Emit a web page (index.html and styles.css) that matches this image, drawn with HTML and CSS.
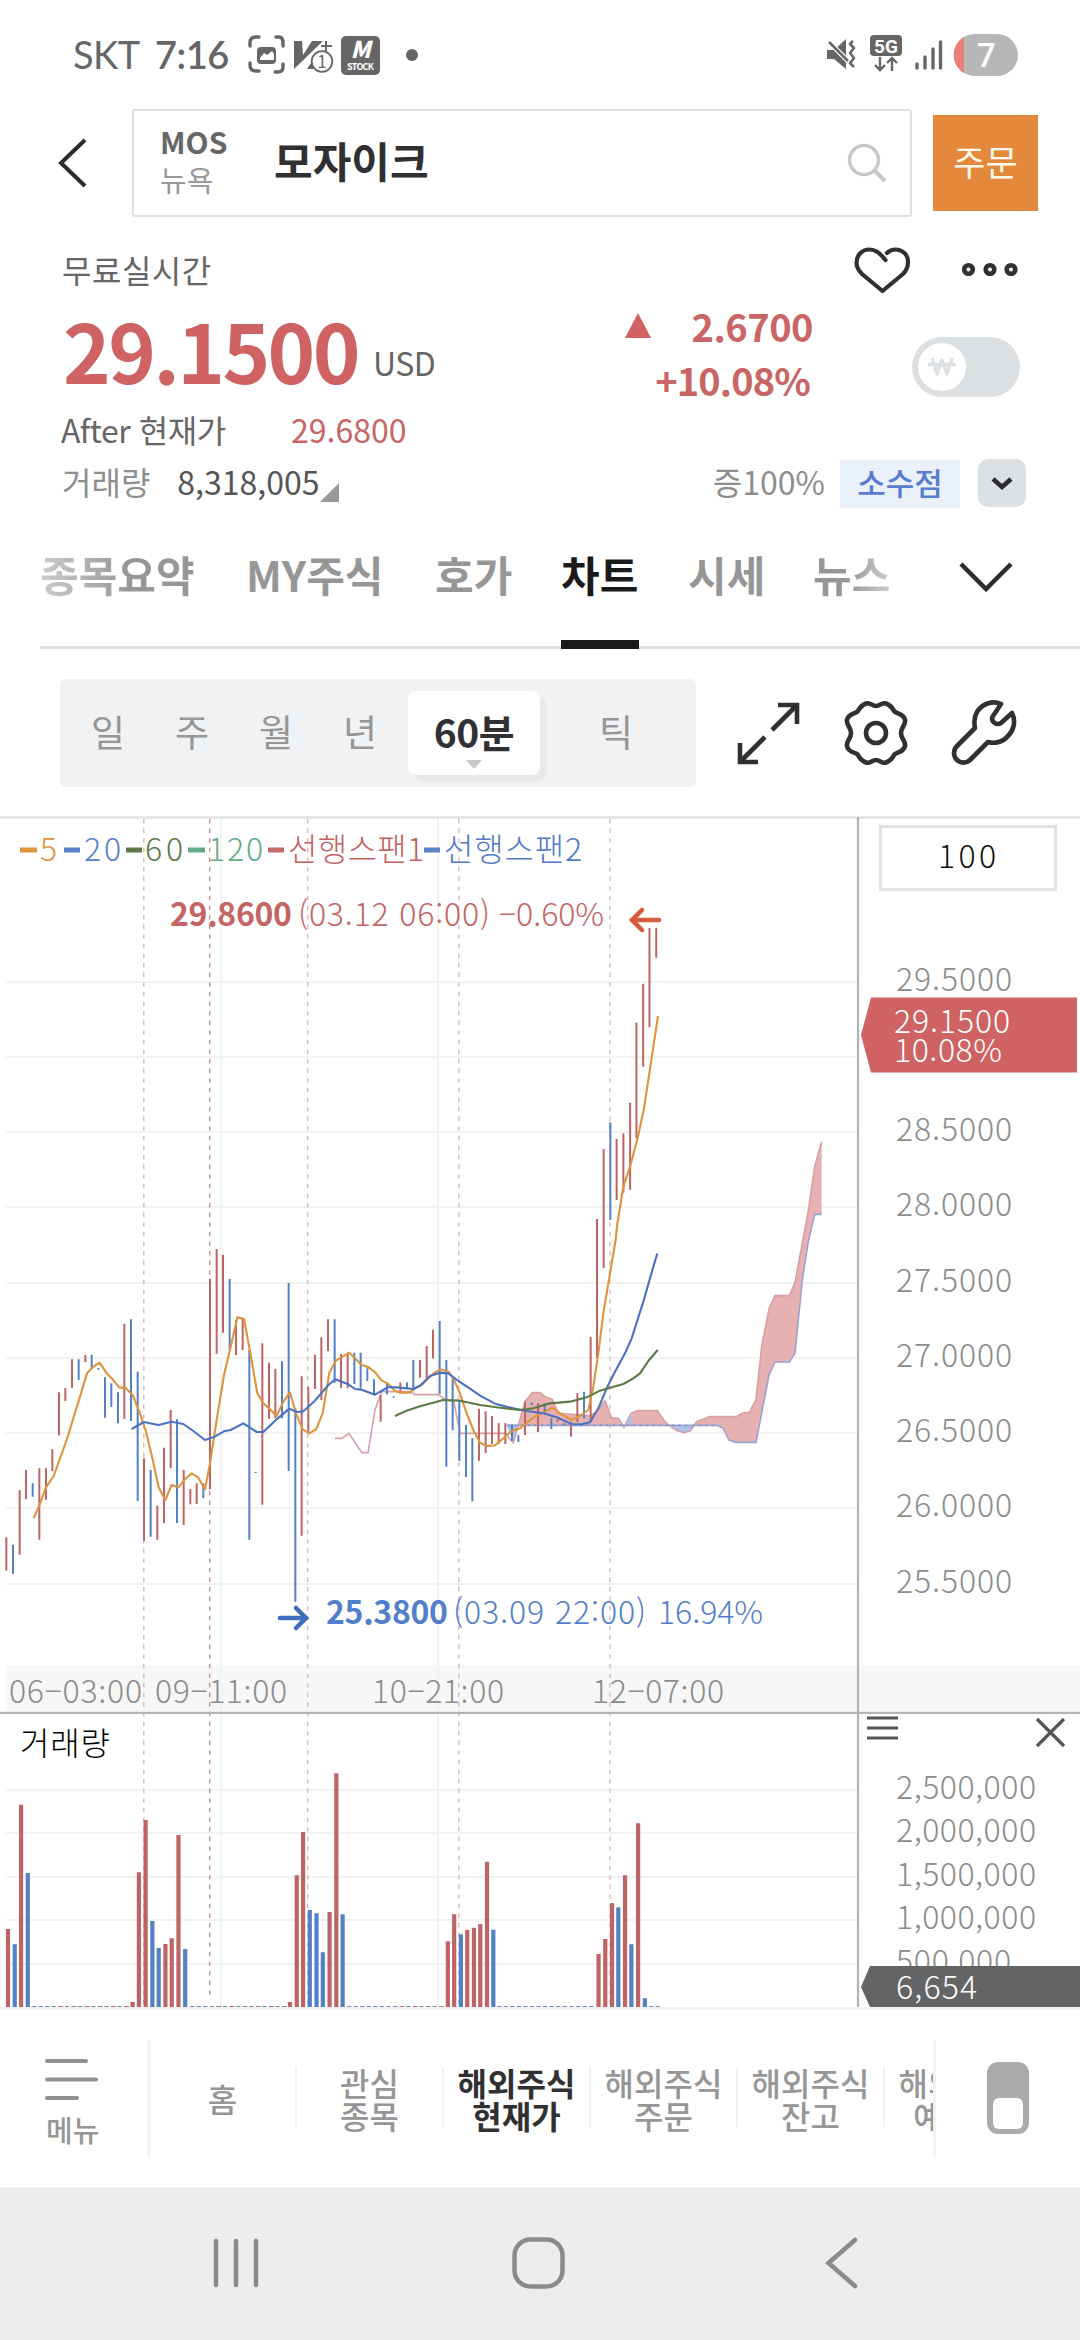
FILE: index.html
```html
<!DOCTYPE html>
<html lang="ko">
<head>
<meta charset="utf-8">
<title>모자이크 - 해외주식 현재가</title>
<link rel="stylesheet" href="styles.css">
</head>
<body>
<div class="screen">
  <header class="status">
    <span class="carrier">SKT</span><span class="clock">7:16</span>
    <svg class="status-left" width="170" height="40" viewBox="248 35 170 40">
      <g fill="none" stroke="#666" stroke-width="3.4" stroke-linecap="round">
        <path d="M250 46v-3q0-6 6-6h3M276 37h3q4 0 4 6v3M283 64v3q0 5-5 5h-3M259 71h-3q-6 0-6-6v-2"/>
      </g>
      <rect x="257" y="47" width="19" height="17" rx="4" fill="#666"/>
      <path d="M260 60v-2l4-5 3 2 5-4 2 3v6z" fill="#fff"/>
      <path d="M294 41h8l1 14 9-14h11l-29 28zM307 69l8-12h6v12z" fill="#666"/>
      <path d="M326 41v10M321 46h11" stroke="#666" stroke-width="2"/>
      <circle cx="322" cy="61.500" r="10.300" fill="#fff" stroke="#666" stroke-width="1.800"/>
      <text x="322" y="68" text-anchor="middle" font-size="17" fill="#666">1</text>
      <rect x="341" y="36" width="39" height="39" rx="5" fill="#666"/>
      <text x="360.500" y="58" text-anchor="middle" font-size="23" font-weight="900" font-style="italic" fill="#fff">M</text>
      <text x="347" y="70" textLength="27" font-size="9" font-weight="700" fill="#fff">STOCK</text>
      <circle cx="412" cy="55" r="6" fill="#666"/>
    </svg>
    <svg class="status-right" width="194" height="42" viewBox="825 34 194 42">
      <path d="M827 50h7l12-11v30l-12-10h-7z" fill="#666"/>
      <path d="M828 41l20 20" stroke="#fff" stroke-width="5"/>
      <path d="M829 42l19 19" stroke="#666" stroke-width="2.500"/>
      <path d="M853 41l-3 3 4 4-4 5 4 5-4 5 4 4" fill="none" stroke="#666" stroke-width="2.600" stroke-linejoin="round"/>
      <rect x="870" y="35" width="32" height="21" rx="4" fill="#666"/>
      <text x="886" y="52.500" text-anchor="middle" font-size="19" font-weight="700" font-family="Roboto" fill="#fff">5G</text>
      <path d="M880 57v13M875 65l5 5 5-5M892 71v-13M887 63l5-5 5 5" fill="none" stroke="#666" stroke-width="2.400"/>
      <path d="M917 64v4M925 57v11M933 49v19M940.500 42v26" stroke="#666" stroke-width="3.400" stroke-linecap="round"/>
      <rect x="954" y="34" width="64" height="42" rx="21" fill="#b7b7b7"/>
      <path d="M963.500 37.500v35A21 21 0 0 1 963.500 37.500z" fill="#ea8076" stroke="#ea8076" stroke-width="1"/>
      <text x="986.500" y="67" text-anchor="middle" font-size="33" font-weight="500" font-family="Roboto" fill="#fff">7</text>
    </svg>
  </header>

  <div class="search-row">
    <svg class="back" width="30" height="52" viewBox="0 0 30 52"><path d="M28 3L4 26l24 23" fill="none" stroke="#2c2c2e" stroke-width="4"/></svg>
    <div class="search-box">
      <div class="ticker"><b>MOS</b><span>뉴욕</span></div>
      <strong class="stock-name">모자이크</strong>
      <svg class="lens" width="40" height="40" viewBox="0 0 40 40" fill="none" stroke="#c6c9cb" stroke-width="3.500"><circle cx="17" cy="17" r="14.500"/><path d="M27 27l11 11" stroke-width="4"/></svg>
    </div>
    <button class="order">주문</button>
  </div>

  <section class="quote">
    <div class="q-live"><span>무료실시간</span>
      <svg width="170" height="50" viewBox="853 245 170 50" fill="none" stroke="#303032" stroke-linecap="round" stroke-linejoin="round">
        <path d="M885.500 260C879 252 875 249.500 869.500 249.500C861 249.500 856.500 256 856.500 263C856.500 268 859 271 862 274L882.500 291L903 274C906 271 908 268 908 262C908 254 902 249.500 895.500 249.500C892 249.500 889 251 887 253" stroke-width="4.200"/>
        <g stroke-width="4.600"><circle cx="968.500" cy="269.500" r="4.300"/><circle cx="990" cy="269.500" r="4.300"/><circle cx="1011" cy="269.500" r="4.300"/></g>
      </svg>
    </div>
    <div class="q-price">
      <span class="price">29.1500</span><span class="unit">USD</span>
      <div class="change"><div><i class="tri"></i>2.6700</div><div class="pct">+10.08%</div></div>
      <div class="won"><span><svg width="28" height="20" viewBox="0 0 28 20"><path d="M4 1l5 16 5-14 5 14 5-16M0 7.500h28" fill="none" stroke="#dce0e3" stroke-width="3.400" stroke-linejoin="round"/></svg></span></div>
    </div>
    <div class="q-after"><span class="dark">After 현재가</span><span class="after-price">29.6800</span></div>
    <div class="q-vol"><span>거래량</span><span class="vol">8,318,005</span><i class="corner"></i>
      <span class="margin">증100%</span><span class="fraction">소수점</span>
      <span class="drop"><svg width="22" height="14" viewBox="0 0 22 14"><path d="M2 3l9 8 9-8" fill="none" stroke="#2c2c2e" stroke-width="4.500"/></svg></span>
    </div>
  </section>

  <nav class="tabs">
    <span class="t1">종목요약</span><span class="t2">MY주식</span><span class="t3">호가</span><span class="t4 on">차트</span><span class="t5">시세</span><span class="t6">뉴스</span>
    <svg width="54" height="30" viewBox="0 0 54 30"><path d="M2 2l25 25L52 2" fill="none" stroke="#2c2c2e" stroke-width="4.500"/></svg>
  </nav>

  <div class="tools">
    <div class="periods"><span>일</span><span>주</span><span>월</span><span>년</span><b>60분<i></i></b><span class="tick">틱</span></div>
    <svg width="282" height="66" viewBox="736 700 282 66" fill="none" stroke="#303032" stroke-width="4.600" stroke-linejoin="round">
      <path d="M778 705h19v19M797 705l-25 25M758 762h-18v-19M740 762l25-25" stroke-linejoin="miter"/>
      <path d="M866 703.500C870 702 872 706 876 706C880 706 882 702 886 703.500C890 705 892 707 894 711C896 714 904 713 905 720C906 725 901 727 901 733C901 739 906 741 905 746C903 753 896 752 894 755C892 759 890 761 886 762.500C882 764 880 760 876 760C872 760 870 764 866 762.500C862 761 860 759 858 755C856 752 848 753 847 746C846 741 851 739 851 733C851 727 846 725 847 720C848 713 856 714 858 711C860 707 862 705 866 703.500Z"/>
      <circle cx="876" cy="733" r="10"/>
      <path d="M1001 704C992 700 982 704 977 712C974 717 974 723 975 728L957 746C953 750 953 756 957 760C961 764 967 763 970 760L988 742C995 744 1003 742 1008 736C1014 730 1016 721 1012 713L1001 723C996 726 990 721 993 716Z"/>
    </svg>
  </div>

  <main class="chart">
  <svg width="1080" height="1194" viewBox="0 816 1080 1194">
    <path d="M0 817.500H1080" stroke="#e2e2e2" stroke-width="2.500"/>
    <path d="M6 1665H1080V1711H6z" fill="#f7f7f7"/>
    <g stroke="#f3f3f3" stroke-width="2" fill="none">
      <path d="M6 982H857M6 1057H857M6 1132H857M6 1207H857M6 1283H857M6 1358H857M6 1433H857M6 1508H857M6 1584H857M6 1790H857M6 1833H857M6 1877H857M6 1920H857M6 1964H857M221 819V2007M438 819V2007"/>
    </g>
    <g stroke="#d6b4b4" stroke-width="1.300" stroke-dasharray="4.500 5.100"><path d="M143.800 819V2007M307.700 819V2007M458.800 819V2007M610 819V2007"/><path d="M209.700 819V2000" stroke="#c08888"/></g>

    <!-- Ichimoku cloud -->
    <g transform="translate(380 1240) scale(.33333)">
      <path fill="#a9c2ee" d="M380 556H415L400 608zM735 556L753 518 762 556zM872 556H942L932 574 912 578 892 573z"/>
      <path fill="#e7b1b1" d="M415 556L435 485 457 458H480L495 470 517 478 535 520 630 527 650 515 675 482 695 534H715L732 556zM755 556V518L773 512H832L855 545 872 557zM940 556L950 545 990 530H1068L1088 519 1108 517 1128 478 1146 312 1167 207 1185 167H1228L1245 128 1267 8 1284 -82 1304 -220 1325 -295V-77H1304L1284 10 1267 120 1245 340 1228 366H1185L1167 405 1146 515 1128 607H1068L1047 600 1030 565 1010 556z"/>
      <path class="ln" stroke="#d9a0a4" d="M-135 595H-115L-93 580-75 608-54 638H-36L-15 510 5 455H95L103 464H175L190 475 222 487 240 580H375L400 608 415 555 435 485 457 458H480L495 470 517 478 535 520 630 527 650 515 675 482 695 534H715L732 562 753 520 773 512H832L855 545 872 560 892 572 912 578 932 572 950 545 990 530H1068L1088 519 1108 517 1128 478 1146 312 1167 207 1185 167H1228L1245 128 1267 8 1284 -82 1304 -220 1325 -295"/>
      <path class="ln" stroke="#9aa2d2" d="M380 556H1010L1030 565 1047 600 1068 607H1128L1146 515 1167 405 1185 366H1228L1245 340 1267 120 1284 10 1304 -77H1325"/>
      <path stroke="#8289b8" stroke-width="5" stroke-dasharray="4 15.700" d="M385 556H1010"/>
    </g>
    <!-- high-low bars and moving averages -->
    <g transform="translate(0 1240) scale(.33333)">
      <path class="cd red" d="M19 892V992M59 750V944M78 690V778M118 685V899M138 685V779M157 627V694M177 457V586M196 444V483M216 358V443M256 345V367M373 251V537M432 655V902M472 797V899M492 623V850M512 510V685M551 690V855M571 747V793M590 730V792M630 116V748M650 27V341M669 44V278M708 240V345M728 233V330M787 310V794M807 368V536M826 387V535M905 409V887M925 441V577M945 344V447M964 292V480M984 238V334M1023 342V444M1043 338V445M1142 465V545"/>
      <path class="cd blue" d="M39 914V1002M98 730V770M236 358V420M275 345V385M295 384V389M315 412V533M334 430V501M354 457V550M393 238V543M413 395V783M452 690V890M531 538V849M610 730V774M689 117V327M748 330V899M767 696V699M846 364V535M866 129V693M886 505V1085M1004 238V428M1063 338V432M1082 338V445M1102 385V423M1122 418V465M1161 430V463M1181 469V473"/>
    </g>
    <g transform="translate(380 1240) scale(.33333)">
      <path class="cd red" d="M61 427V460M120 360V413M140 318V420M159 269V355M297 506V662M317 514V639M336 528V612M356 549V612M376 549V612M435 485V585M474 490V576M533 538V545M573 545V590M592 459V545M632 291V545M651 -63V355M671 -273V84"/>
      <path class="cd blue" d="M81 427V447M100 360V445M179 243V462M199 360V680M218 415V571M238 480V663M258 555V711M277 594V784M396 553V603M415 585V606M455 487V495M494 490V520M514 535V567M553 550V556M612 455V535"/>
    </g>
    <g transform="translate(0 810) scale(.42092 .33333)">
      <path class="cd red" d="M1465 987V1170M1481 970V1148M1497 878V1139M1512 638V985M1528 521V770M1543 354V652M1559 354V443"/>
      <path class="cd blue" d="M1450 937V1230"/>
    </g>
    <g transform="translate(0 1240) scale(.33333)">
      <path class="ma" stroke="#dd943e" d="M101 834L118 796 138 742 161 708 200 600 240 470 261 400 280 380 299 368 320 400 338 418 358 443H376L398 465 420 520 438 575 455 645 476 742 496 780 515 735 535 742 555 718 575 700 595 713 615 748 630 670 650 540 672 405 692 320 712 232 732 237 752 345 772 460 790 490 810 508 830 528 850 485 870 457 888 520 908 568 928 580 948 568 968 520 988 398 1008 362 1028 350 1048 338 1065 355 1085 375 1106 382 1126 398 1145 422 1164 431 1185 452 1200 458H1230L1245 445 1265 435 1285 415 1305 397 1322 388 1345 395 1360 415 1380 460 1400 520 1420 570 1440 608 1460 618 1485 616 1510 595 1535 573 1560 565 1580 548 1605 530 1630 518 1657 503 1680 520 1715 540 1740 528 1765 510 1780 440 1795 340 1810 220 1830 100 1847 0 1851 -42 1870 -160 1890 -220 1913 -305 1932 -395 1951 -520 1974 -672"/>
      <path class="ma" stroke="#4a72c4" d="M395 567L432 546 475 555 515 545 550 552 580 573 615 600 640 592 672 574 692 570 730 550 770 576H790L830 538 868 506 890 516 910 514 945 482 985 435 1006 418 1045 433 1065 447 1085 449 1125 464 1165 441 1200 443 1240 447 1260 437 1290 408 1320 398 1345 400 1375 423 1410 446 1440 467 1485 491 1540 505 1580 513 1630 520 1670 532 1715 552 1745 553 1770 547 1795 505 1820 445 1845 395 1875 340 1895 295 1930 185 1960 80 1972 40"/>
      <path class="ma" stroke="#5b7a45" d="M1185 528L1220 512 1260 499 1330 480 1380 482 1440 495 1490 502 1560 510 1600 505 1650 490 1710 485 1760 472 1800 452 1830 443 1870 432 1900 415 1920 400 1945 363 1973 330"/>
    </g>

    <!-- volume bars -->
    <g transform="translate(0 1640) scale(.42092 .33333)">
      <path class="vb red" d="M19 1101V867M50 1101V494M315 1101V1086M330 1101V697M346 1101V540M393 1101V912M408 1101V895M424 1101V585M689 1101V1086M705 1101V706M720 1101V576M783 1101V816M799 1101V400M1064 1101V904M1079 1101V823M1110 1101V870M1126 1101V863M1141 1101V852M1157 1101V665M1422 1101V942M1438 1101V897M1454 1101V790M1485 1101V706M1516 1101V550"/>
      <path class="vb blue" d="M35 1101V913M66 1101V699M362 1101V843M377 1101V924M440 1101V927M736 1101V810M752 1101V820M767 1101V937M814 1101V823M1095 1101V883M1172 1101V869M1469 1101V802M1500 1101V913M1532 1101V1075"/>
    </g>
    <path d="M32 2006.500H130M190 2006.500H288M347 2006.500H444M497 2006.500H595M649 2006.500H661" stroke="#7c8fa8" stroke-width="1.200" stroke-dasharray="4.300 2.270"/>
    <path d="M59 2006.500H130M217 2006.500H288M400 2006.500H444" stroke="#b87878" stroke-width="1.200" stroke-dasharray="4.300 8.840"/>

    <path d="M0 1712.800H1080M858 817V2007" stroke="#b3b3b3" stroke-width="2.200" fill="none"/>
    <path d="M0 2008.500H1080" stroke="#f1f2f4" stroke-width="3"/>

    <!-- legend and labels -->
    <g stroke-width="5"><path d="M20 850H37" stroke="#dd943e"/><path d="M64 850H80" stroke="#5a80cc"/><path d="M126 850H142" stroke="#5b7a45"/><path d="M188 850H205" stroke="#63ad86"/><path d="M268 850H284" stroke="#c46c6c"/><path d="M424 850H440" stroke="#5a83c9"/></g>
    <g class="num">
      <text x="40" y="861" fill="#dd943e">5</text><text x="84" y="861" textLength="37" fill="#5a80cc">20</text><text x="145" y="861" textLength="38" fill="#5b7a45">60</text><text x="208" y="861" textLength="55" fill="#63ad86">120</text>
      <text x="288" y="861" textLength="136" fill="#c05f5f">선행스팬1</text><text x="444" y="861" textLength="138" fill="#4f7ac6">선행스팬2</text>
      <g fill="#c46464"><text x="170" y="926" textLength="122" font-weight="700">29.8600</text><text x="298" y="926" textLength="192">(03.12 06:00)</text><text x="499" y="926" textLength="105">−0.60%</text></g>
      <g fill="#527fcb"><text x="326" y="1624" textLength="122" font-weight="700">25.3800</text><text x="453" y="1624" textLength="193">(03.09 22:00)</text><text x="658" y="1624" textLength="105">16.94%</text></g>
      <g fill="#8c8c8c"><text x="9" y="1703" textLength="133">06−03:00</text><text x="155" y="1703" textLength="132">09−11:00</text><text x="372" y="1703" textLength="132">10−21:00</text><text x="592" y="1703" textLength="132">12−07:00</text>
        <text x="896" y="991" textLength="116">29.5000</text><text x="896" y="1141" textLength="116">28.5000</text><text x="896" y="1216" textLength="116">28.0000</text><text x="896" y="1292" textLength="116">27.5000</text><text x="896" y="1367" textLength="116">27.0000</text><text x="896" y="1442" textLength="116">26.5000</text><text x="896" y="1517" textLength="116">26.0000</text><text x="896" y="1593" textLength="116">25.5000</text>
        <text x="896" y="1799" textLength="140">2,500,000</text><text x="896" y="1842" textLength="140">2,000,000</text><text x="896" y="1886" textLength="140">1,500,000</text><text x="896" y="1929" textLength="140">1,000,000</text><text x="896" y="1973" textLength="115">500,000</text></g>
      <text x="20" y="1755" textLength="90" fill="#000">거래량</text>
      <rect x="880.500" y="826.500" width="175" height="63" fill="#fff" stroke="#dfe3e5" stroke-width="3"/>
      <text x="938" y="868" textLength="58" fill="#111">100</text>
      <path d="M861 1035L871 997.500H1077V1072.500H871z" fill="#cf6262"/>
      <g fill="#fff"><text x="894" y="1033" textLength="116">29.1500</text><text x="894" y="1062" textLength="108">10.08%</text></g>
      <path d="M861 1987L870 1966H1080V2007H870z" fill="#636466"/>
      <text x="896" y="1999" textLength="81" fill="#fff">6,654</text>
    </g>
    <path d="M659 920H633M642 910L632 920 642 930" stroke="#d9593f" stroke-width="4.500" fill="none" stroke-linecap="round"/>
    <path d="M280 1618H306M296 1608L306 1618 296 1628" stroke="#3f6db8" stroke-width="4.500" fill="none" stroke-linecap="round"/>
    <path d="M867 1718H898M867 1728H898M867 1738H898M1037 1719L1064 1746M1064 1719L1037 1746" stroke="#555" stroke-width="3.200"/>
  </svg>
  </main>

  <nav class="bottom">
    <div class="menu"><svg width="54" height="44" viewBox="0 0 54 44"><path d="M3 3H42M3 21.500H52M3 40H33" stroke="#8f9192" stroke-width="4" stroke-linecap="round"/></svg><span>메뉴</span></div>
    <div class="strip"><span>홈</span><span>관심<br>종목</span><span class="on">해외주식<br>현재가</span><span>해외주식<br>주문</span><span>해외주식<br>잔고</span><span>해외주식<br>예수금</span></div>
    <div class="switch"><i></i></div>
  </nav>
  <footer class="android">
    <svg width="1080" height="153" viewBox="0 2187 1080 153" fill="none" stroke="#8a8a8b" stroke-width="4.500" stroke-linecap="round"><path d="M216 2241V2285M236 2241V2285M256 2241V2285M855 2240L828.500 2263 855 2286" /><rect x="514.500" y="2239.500" width="48" height="47" rx="16"/></svg>
  </footer>
</div>
</body>
</html>
```
FILE: styles.css
```css
* { box-sizing: border-box; }
body {
  margin: 0;
  background: #fff;
  font-family: "Noto Sans CJK KR", "Noto Sans", sans-serif;
  font-size: 32px;
  line-height: 1;
  color: #666;
}
svg { display: block; flex: none; }
i { display: block; font-style: normal; }
.screen { width: 1080px; height: 2340px; overflow: hidden; display: flex; flex-direction: column; }
.screen > * { flex: none; white-space: nowrap; }

.status { height: 109px; padding: 34px 61px 33px 73px; display: flex; align-items: center; color: #666; }
.carrier { width: 82px; font-family: Lato, sans-serif; font-size: 38px; letter-spacing: -0.5px; padding-bottom: 2px; }
.clock { width: 93px; font-family: Lato, sans-serif; font-size: 38px; font-weight: 600; padding-bottom: 2px; letter-spacing: -0.5px; }
.status-right { margin-left: auto; }

.search-row { height: 108px; padding: 0 42px 0 57px; display: flex; align-items: center; }
.search-box { width: 780px; height: 108px; margin: 0 21px 0 45px; padding: 0 23px 0 26px; border: 2.5px solid #dde1e3; border-radius: 3px; display: flex; align-items: center; }
.ticker { width: 114px; display: flex; flex-direction: column; gap: 9px; font-size: 29px; color: #999; padding-bottom: 6px; }
.ticker b { font-size: 30px; color: #666; }
.stock-name { font-size: 42px; color: #303032; padding-bottom: 6px; }
.lens { margin-left: auto; }
.order { width: 105px; height: 96px; border: 0; padding: 0 0 5px; background: #e4893b; color: #fff8ec; font: 400 35px "Noto Sans CJK KR", sans-serif; }

.quote { height: 293px; padding: 28px 54px 0 62px; display: flex; flex-direction: column; }
.q-live { height: 50px; display: flex; justify-content: space-between; align-items: center; }
.q-live span { padding-bottom: 2px; letter-spacing: 0.5px; }
.q-live svg { margin-right: 3px; }
.q-price { height: 121px; display: flex; }
.price { width: 311px; padding-left: 1px; font-size: 81px; font-weight: 700; line-height: 107px; color: #cf6262; letter-spacing: -2.6px; }
.unit { font-size: 32px; padding-top: 51px; width: 188px; letter-spacing: -0.5px; }
.change { width: 252px; padding-top: 4px; text-align: right; font-size: 38px; font-weight: 700; line-height: 54px; color: #c96565; letter-spacing: -0.5px; }
.change > div { display: flex; justify-content: flex-end; }
.change .pct { padding-right: 3px; letter-spacing: -0.9px; }
.tri { border: 13px solid transparent; border-top: 0; border-bottom: 25px solid #d26262; height: 0; margin: 14px 41px 0 0; }
.won { width: 108px; height: 60px; margin: 42px 0 0 99px; padding: 6px; border-radius: 30px; background: #dce0e3; }
.won span { width: 48px; height: 48px; border-radius: 24px; background: #fff; display: flex; align-items: center; justify-content: center; }
.q-after { height: 44px; display: flex; margin-top: -2px; }
.dark { width: 229px; margin-left: -1px; color: #666; letter-spacing: -0.4px; }
.after-price { color: #c96565; padding-left: 1px; }
.q-vol { height: 50px; margin-top: 3px; display: flex; align-items: center; color: #8e8e8e; }
.q-vol span { position: relative; }
.q-vol > span:first-child, .vol, .margin { padding-bottom: 8px; }
.q-vol .vol { width: 142px; margin-left: 27px; color: #555; }
.corner { width: 0; height: 0; border-left: 19px solid transparent; border-bottom: 19px solid #999; margin: 15px 0 0 1px; }
.margin { margin-left: auto; padding-right: 15px; }
.fraction { width: 120px; height: 48px; margin: -3px 18px 0 0; background: #ebf1fb; color: #577cd0; line-height: 44px; text-align: center; font-size: 31px; font-weight: 500; }
.drop { width: 48px; height: 48px; margin-top: -4px; border-radius: 10px; background: #dce0e3; display: flex; align-items: center; justify-content: center; }

.tabs { height: 139px; margin-left: 40px; border-bottom: 3px solid #dfe1e1; display: flex; align-items: flex-start; font-size: 42px; font-weight: 700; line-height: 128px; color: #969696; }
.tabs span { height: 139px; flex: none; }
.t1 { width: 206px; background: linear-gradient(90deg, #ccc, #969696 90px); background-clip: text; color: transparent; }
.t2 { width: 189px; }
.t3 { width: 126px; }
.t4 { width: 78px; margin-right: 49px; }
.t5 { width: 125px; }
.t6 { width: 78px; margin-right: 68px; background: linear-gradient(90deg, #969696 35px, #d0d0d0); background-clip: text; color: transparent; }
.tabs .on { color: #1a1a1a; border-bottom: 9px solid #1a1a1a; }
.tabs svg { margin-top: 52px; }

.tools { height: 160px; margin-top: 7px; padding: 23px 0 0 60px; display: flex; }
.periods { width: 636px; height: 108px; margin-right: 40px; border-radius: 6px; background: #f0f2f4; display: flex; align-items: center; font-size: 37px; color: #969696; padding-left: 6px; }
.periods span { width: 84px; text-align: center; padding-bottom: 4px; }
.periods b { width: 132px; height: 84px; margin-left: 6px; border-radius: 8px; background: #fff; box-shadow: 6px 6px 1px #e6e8ea; color: #303032; font-size: 39px; text-align: center; line-height: 80px; letter-spacing: -0.5px; display: flex; flex-direction: column; align-items: center; }
.periods i { border: 8px solid transparent; border-bottom: 0; border-top: 9px solid #c6c8cb; margin-top: -11px; }
.periods .tick { width: 152px; }
.tools svg { margin-top: 21px; }

.chart { height: 1194px; }
.num { font-size: 32px; font-weight: 300; }
.cd, .ma, .ln, .vb { fill: none; vector-effect: non-scaling-stroke; }
.cd { stroke-width: 2px; }
.ma { stroke-width: 2.1px; stroke-linejoin: round; }
.ln { stroke-width: 1.6px; }
.vb { stroke-width: 4.2px; }
.red { stroke: #bf6464; }
.blue { stroke: #5281c4; }

.bottom { height: 177px; display: flex; align-items: flex-start; padding-top: 30px; color: #969696; }
.menu { width: 150px; height: 117px; border-right: 3px solid #f1f2f3; padding: 18px 0 0 44px; font-size: 29px; font-weight: 500; }
.menu span { display: block; padding: 13px 0 0 2px; }
.strip { width: 786px; height: 117px; border-right: 3px solid #f1f2f3; display: flex; overflow: hidden; padding-top: 27px; }
.strip span { flex: none; width: 147px; height: 60px; padding-top: 3px; border-right: 2.5px solid #f1f2f3; display: flex; align-items: center; justify-content: center; text-align: center; font-size: 32px; font-weight: 500; line-height: 33px; }
.strip .on { color: #303032; font-weight: 700; }
.switch { width: 42px; height: 72px; margin: 22px 0 0 51px; border-radius: 11px; background: #a9abac; padding: 36px 6px 0 6px; }
.switch i { height: 31px; border-radius: 6px; background: #fff; }
.android { height: 153px; background: #ededef; }
```
